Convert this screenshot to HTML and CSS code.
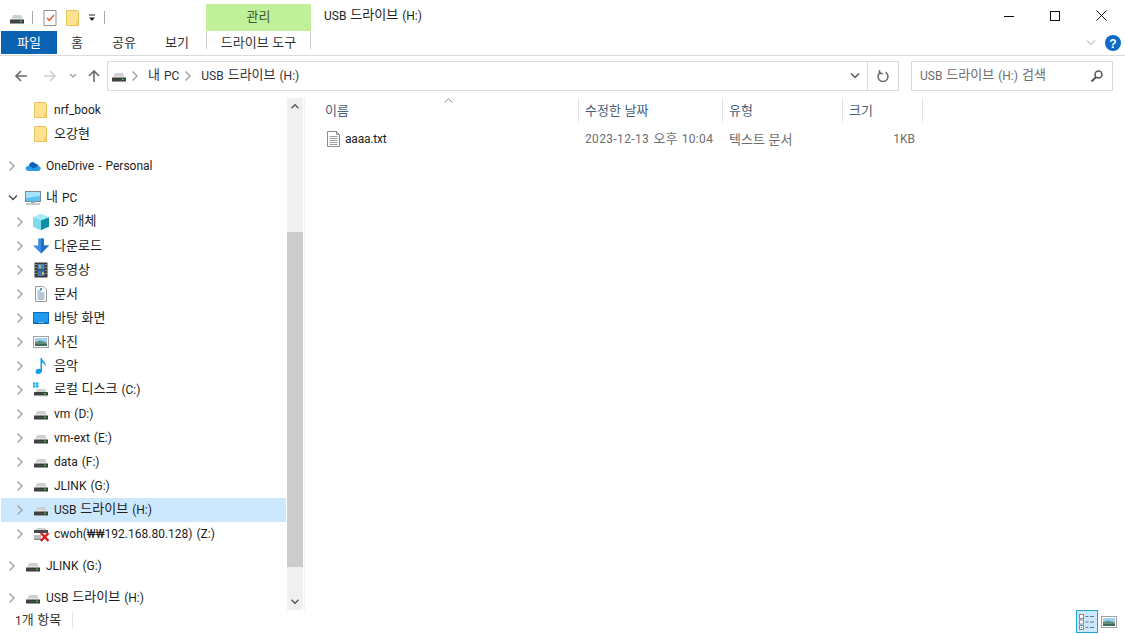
FILE: index.html
```html
<!DOCTYPE html>
<html lang="ko">
<head>
<meta charset="utf-8">
<title>USB 드라이브 (H:)</title>
<link rel="stylesheet" href="styles.css">
</head>
<body>
<svg class="defs" width="0" height="0" aria-hidden="true">
  <defs>
    <symbol id="drive" viewBox="0 0 16 16">
      <path d="M2.500 9 4 5h8l1.500 4z" fill="#cfcfcf"/>
      <path d="M1 9.500 2.500 8h11L15 9.500z" fill="#e0e0e0"/>
      <rect x="1" y="9.500" width="14" height="3.500" rx=".5" fill="#404040"/>
      <rect x="1" y="13" width="14" height="1" fill="#9a9a9a"/>
      <rect x="11" y="10.700" width="1.600" height="1.300" fill="#3fe04a"/>
    </symbol>
    <symbol id="folder" viewBox="0 0 16 16">
      <path d="M1.500 .5h11l1 1v14H1.500z" fill="#fde28f" stroke="#e8c35a"/>
      <path d="M11 11h2.500v4H11z" fill="#f5cf68"/>
    </symbol>
    <symbol id="cloud" viewBox="0 0 16 16">
      <path d="M4 7.500a3.500 3.500 0 0 1 6.500-1.800A3 3 0 0 1 13.500 8l-5 3.500-6-1z" fill="#0a62b8"/>
      <path d="M3 13a2.500 2.500 0 0 1-.6-4.900L4.500 7.800l4 2.700 5-2.400a2.500 2.500 0 0 1 2.200 2.500 2.400 2.400 0 0 1-2.400 2.400z" fill="#2a9be8"/>
    </symbol>
    <symbol id="pc" viewBox="0 0 16 16">
      <rect x=".5" y="1.500" width="15" height="10" fill="#5cc4f5" stroke="#7a8a96"/>
      <path d="M1 2h14v4L1 8z" fill="#a5e2fb"/>
      <path d="M6 11.500h4v1.500H6z" fill="#a0a8ae"/>
      <path d="M1 13.500h14v1H1z" fill="#8c97a0"/>
    </symbol>
    <symbol id="cube" viewBox="0 0 16 16">
      <path d="M8 0 16 3.500v9L8 16 0 12.500v-9z" fill="#33b9d0"/>
      <path d="M8 0 16 3.500 8 6.500 0 3.500z" fill="#a8ecf5"/>
      <path d="M0 3.500 8 6.500V16L0 12.500z" fill="#7fdcea"/>
      <path d="M8 6.500 16 3.500v9L8 16z" fill="#0f8ea8"/>
    </symbol>
    <symbol id="down" viewBox="0 0 16 16">
      <path d="M5.200 .5h5.600v7H16L8 15.500 0 7.500h5.200z" fill="#3a8fe0"/>
      <path d="M8 .5h2.800v7H16L8 15.500z" fill="#1f6fc4"/>
    </symbol>
    <symbol id="film" viewBox="0 0 16 16">
      <rect x="1.500" y="0.500" width="13" height="15" fill="#3a3a3a"/>
      <path d="M4.500 2h7v5.500h-7z" fill="#3f87c8"/>
      <path d="M4.500 8.500h7v5.500h-7z" fill="#3f78b0"/>
      <path d="M6 3h2v3H6zM9 10h2v3H9z" fill="#d8b04a"/>
      <path d="M2.500 2h1v1h-1zM2.500 5h1v1h-1zM2.500 8h1v1h-1zM2.500 11h1v1h-1zM12.500 2h1v1h-1zM12.500 5h1v1h-1zM12.500 8h1v1h-1zM12.500 11h1v1h-1z" fill="#d8d8d8"/>
    </symbol>
    <symbol id="doc" viewBox="0 0 16 16">
      <path d="M2.500 .5h8l3 3v12h-11z" fill="#fff" stroke="#9a9a9a"/>
      <path d="M4.500 5h3M4.500 7h7M4.500 9h7M4.500 11h7M4.500 13h7" stroke="#6f8fa8"/>
      <path d="M7 2h2v2.500H7z" fill="#4a9ad8"/>
    </symbol>
    <symbol id="txt" viewBox="0 0 16 16">
      <path d="M1.500 .5h9l3 3v12h-12z" fill="#fff" stroke="#8c8c8c"/>
      <path d="M10.500 .5v3h3" fill="none" stroke="#8c8c8c"/>
      <path d="M3.500 5.500h8M3.500 7.500h8M3.500 9.500h8M3.500 11.500h8M3.500 13.500h8" stroke="#a0a0a0"/>
    </symbol>
    <symbol id="desk" viewBox="0 0 16 16">
      <rect x=".5" y="2.500" width="15" height="11" fill="#1e9bf0" stroke="#0f6cb8"/>
      <path d="M1 12.500h14v1H1z" fill="#0a5ea8"/>
      <path d="M5 12h6v.600H5z" fill="#bfe6ff"/>
    </symbol>
    <symbol id="pic" viewBox="0 0 16 16">
      <rect x=".5" y="2.500" width="15" height="11" fill="#fff" stroke="#a0a0a0"/>
      <path d="M2 4h12v4H2z" fill="#9ed2f0"/>
      <path d="M2 8 7 6.500 14 8.500V12H2z" fill="#5f8f7a"/>
      <path d="M2 10h12v2H2z" fill="#3f6a5f"/>
    </symbol>
    <symbol id="note" viewBox="0 0 16 16">
      <path d="M7.500 0h1.500c.2 3.500 4.800 4.200 3.600 8.800-.3-2.300-2.300-3.800-3.600-4.200V13c0 1.800-1.700 3-3.500 3S2.500 15 2.500 13.400 4.200 10.800 6 10.800c.6 0 1.100.1 1.500.3z" fill="#12a0e8"/>
    </symbol>
    <symbol id="sys" viewBox="0 0 16 16">
      <path d="M2.500 10 4 7h8l1.500 3z" fill="#cfcfcf"/>
      <rect x="1" y="10" width="14" height="3.200" rx=".5" fill="#404040"/>
      <rect x="1" y="13.200" width="14" height="1" fill="#9a9a9a"/>
      <rect x="11" y="11" width="1.600" height="1.300" fill="#3fe04a"/>
      <path d="M0 .5h2.500V2.800H0zM3 .5h2.500V2.800H3zM0 3.300h2.500v2.300H0zM3 3.300h2.500v2.300H3z" fill="#12b0ee"/>
    </symbol>
    <symbol id="net" viewBox="0 0 16 16">
      <path d="M2.500 4 4 2h8l1.500 2z" fill="#cfcfcf"/>
      <rect x="1" y="4" width="14" height="3" fill="#4a4a4a"/>
      <rect x="1" y="9" width="7" height="3.500" fill="#bcbcbc"/>
      <path d="M1 12.500h7V14H1z" fill="#8a8a8a"/>
      <path d="M7.800 7 15.500 15M15.500 7 7.800 15" stroke="#e01a1a" stroke-width="2.400"/>
    </symbol>
    <symbol id="chev-r" viewBox="0 0 8 10">
      <path d="M.5 .5 5 5 .5 9.500" fill="none" stroke="#a6a6a6" stroke-width="1.500"/>
    </symbol>
    <symbol id="chev-d" viewBox="0 0 10 8">
      <path d="M1 1.500 5 5.500 9 1.500" fill="none" stroke="#4d4d4d" stroke-width="1.500"/>
    </symbol>
  </defs>
</svg>

<div class="window">
  <header class="titlebar">
    <div class="qat">
      <svg class="ico16"><use href="#drive"/></svg>
      <span class="qat-sep"></span>
      <svg class="ico-props" viewBox="0 0 14 16"><path d="M1 .5h12v15H1z" fill="#fff" stroke="#8f8f8f"/><path d="M4 8 6.300 10.500 11 5" fill="none" stroke="#e2572a" stroke-width="1.400"/></svg>
      <svg class="ico-qfolder"><use href="#folder"/></svg>
      <svg class="ico-menu" viewBox="0 0 8 8"><path d="M1 .5h6v1H1z" fill="#222"/><path d="M1 3.500h6L4 7z" fill="#222"/></svg>
      <span class="qat-sep last"></span>
    </div>
    <div class="context-title ko">관리</div>
    <div class="win-title">USB <span class="ko">드라이브</span> (H:)</div>
    <div class="win-controls">
      <span class="win-btn"><svg width="10" height="10" viewBox="0 0 10 10"><path d="M0 5.500h10" stroke="#111"/></svg></span>
      <span class="win-btn"><svg width="10" height="10" viewBox="0 0 10 10"><rect x=".5" y=".5" width="9" height="9" fill="none" stroke="#111"/></svg></span>
      <span class="win-btn"><svg width="11" height="11" viewBox="0 0 11 11"><path d="M.5.500l10 10M10.500.500l-10 10" stroke="#111"/></svg></span>
    </div>
  </header>

  <nav class="tabs">
    <span class="tab file ko">파일</span>
    <span class="tab t-home ko">홈</span>
    <span class="tab t-share ko">공유</span>
    <span class="tab t-view ko">보기</span>
    <span class="tab context ko">드라이브 도구</span>
    <span class="tabs-end">
      <svg class="ribbon-chev" viewBox="0 0 10 6"><path d="M1 .5 5 4.500 9 .5" fill="none" stroke="#9a9a9a"/></svg>
      <svg class="help" viewBox="0 0 16 16"><circle cx="8" cy="8" r="8" fill="#0f6cc4"/><text x="8" y="12.500" text-anchor="middle" class="help-q">?</text></svg>
    </span>
  </nav>

  <div class="addressrow">
    <div class="navbtns">
      <svg class="nav-arrow" viewBox="0 0 14 14"><path d="M13 7H2M7 2 2 7l5 5" fill="none" stroke="#6b6b6b" stroke-width="1.600"/></svg>
      <svg class="nav-arrow" viewBox="0 0 14 14"><path d="M1 7h11M7 2l5 5-5 5" fill="none" stroke="#d0d0d0" stroke-width="1.600"/></svg>
      <svg class="nav-down" viewBox="0 0 8 6"><path d="M1 1l3 3 3-3" fill="none" stroke="#9a9a9a" stroke-width="1.200"/></svg>
      <svg class="nav-arrow up" viewBox="0 0 14 14"><path d="M7 13V2M2 7l5-5 5 5" fill="none" stroke="#6b6b6b" stroke-width="1.600"/></svg>
    </div>
    <div class="address">
      <svg class="ico16 addr-ico"><use href="#drive"/></svg>
      <svg class="crumb-chev"><use href="#chev-r"/></svg>
      <span class="crumb"><span class="ko">내</span> PC</span>
      <svg class="crumb-chev"><use href="#chev-r"/></svg>
      <span class="crumb">USB <span class="ko">드라이브</span> (H:)</span>
      <svg class="addr-drop" viewBox="0 0 10 8"><path d="M1 1.500 5 5.500 9 1.500" fill="none" stroke="#555" stroke-width="1.500"/></svg>
      <span class="refresh"><svg width="14" height="14" viewBox="0 0 14 14"><path d="M9.500 3.200a5 5 0 1 1-5 0" fill="none" stroke="#6b6b6b" stroke-width="1.500"/><path d="M3.500 1v3.600H7" fill="none" stroke="#6b6b6b" stroke-width="1.500"/></svg></span>
    </div>
    <div class="search">
      <span class="search-text">USB <span class="ko">드라이브</span> (H:) <span class="ko">검색</span></span>
      <svg width="14" height="14" viewBox="0 0 14 14"><circle cx="8.500" cy="5.500" r="3.500" fill="none" stroke="#555" stroke-width="1.500"/><path d="M6 8l-4.500 4.500" stroke="#555" stroke-width="2"/></svg>
    </div>
  </div>

  <main class="main">
    <aside class="tree">
      <div class="tree-list">
        <div class="row d2"><span class="chev"></span><svg class="ico16"><use href="#folder"/></svg><span>nrf_book</span></div>
        <div class="row d2"><span class="chev"></span><svg class="ico16"><use href="#folder"/></svg><span class="ko">오강현</span></div>
        <div class="row d1 gap"><svg class="chev"><use href="#chev-r"/></svg><svg class="ico16"><use href="#cloud"/></svg><span>OneDrive - Personal</span></div>
        <div class="row d1 gap"><svg class="chev wide"><use href="#chev-d"/></svg><svg class="ico16"><use href="#pc"/></svg><span class="mixed"><span class="ko">내</span> PC</span></div>
        <div class="row d2"><svg class="chev"><use href="#chev-r"/></svg><svg class="ico16"><use href="#cube"/></svg><span class="mixed">3D <span class="ko">개체</span></span></div>
        <div class="row d2"><svg class="chev"><use href="#chev-r"/></svg><svg class="ico16"><use href="#down"/></svg><span class="ko">다운로드</span></div>
        <div class="row d2"><svg class="chev"><use href="#chev-r"/></svg><svg class="ico16"><use href="#film"/></svg><span class="ko">동영상</span></div>
        <div class="row d2"><svg class="chev"><use href="#chev-r"/></svg><svg class="ico16"><use href="#doc"/></svg><span class="ko">문서</span></div>
        <div class="row d2"><svg class="chev"><use href="#chev-r"/></svg><svg class="ico16"><use href="#desk"/></svg><span class="ko">바탕 화면</span></div>
        <div class="row d2"><svg class="chev"><use href="#chev-r"/></svg><svg class="ico16"><use href="#pic"/></svg><span class="ko">사진</span></div>
        <div class="row d2"><svg class="chev"><use href="#chev-r"/></svg><svg class="ico16"><use href="#note"/></svg><span class="ko">음악</span></div>
        <div class="row d2"><svg class="chev"><use href="#chev-r"/></svg><svg class="ico16"><use href="#sys"/></svg><span class="mixed"><span class="ko">로컬 디스크</span> (C:)</span></div>
        <div class="row d2"><svg class="chev"><use href="#chev-r"/></svg><svg class="ico16"><use href="#drive"/></svg><span>vm (D:)</span></div>
        <div class="row d2"><svg class="chev"><use href="#chev-r"/></svg><svg class="ico16"><use href="#drive"/></svg><span>vm-ext (E:)</span></div>
        <div class="row d2"><svg class="chev"><use href="#chev-r"/></svg><svg class="ico16"><use href="#drive"/></svg><span>data (F:)</span></div>
        <div class="row d2"><svg class="chev"><use href="#chev-r"/></svg><svg class="ico16"><use href="#drive"/></svg><span>JLINK (G:)</span></div>
        <div class="row d2 selected"><svg class="chev"><use href="#chev-r"/></svg><svg class="ico16"><use href="#drive"/></svg><span class="mixed">USB <span class="ko">드라이브</span> (H:)</span></div>
        <div class="row d2"><svg class="chev"><use href="#chev-r"/></svg><svg class="ico16"><use href="#net"/></svg><span>cwoh(₩₩192.168.80.128) (Z:)</span></div>
        <div class="row d1 gap"><svg class="chev"><use href="#chev-r"/></svg><svg class="ico16"><use href="#drive"/></svg><span>JLINK (G:)</span></div>
        <div class="row d1 gap"><svg class="chev"><use href="#chev-r"/></svg><svg class="ico16"><use href="#drive"/></svg><span class="mixed">USB <span class="ko">드라이브</span> (H:)</span></div>
      </div>
      <div class="scrollbar">
        <svg class="sb-arrow" viewBox="0 0 10 8"><path d="M1 6 5 2l4 4" fill="none" stroke="#555" stroke-width="1.600"/></svg>
        <div class="sb-track"><div class="sb-thumb"></div></div>
        <svg class="sb-arrow" viewBox="0 0 10 8"><path d="M1 2l4 4 4-4" fill="none" stroke="#555" stroke-width="1.600"/></svg>
      </div>
    </aside>

    <section class="files">
      <div class="file-head">
        <svg class="sort" viewBox="0 0 9 5"><path d="M.5 4.500 4.500 .8 8.500 4.500" fill="none" stroke="#8a8a8a"/></svg>
        <span class="col c-name ko">이름</span>
        <span class="col c-date ko">수정한 날짜</span>
        <span class="col c-type ko">유형</span>
        <span class="col c-size ko">크기</span>
      </div>
      <div class="file-row">
        <span class="cell c-name name"><svg class="ico16"><use href="#txt"/></svg>aaaa.txt</span>
        <span class="cell c-date date">2023-12-13 <span class="ko">오후</span> 10:04</span>
        <span class="cell c-type ko">텍스트 문서</span>
        <span class="cell c-size num">1KB</span>
      </div>
    </section>
  </main>

  <footer class="status">
    <span class="count">1<span class="ko">개 항목</span></span>
    <span class="views">
      <span class="view active"><svg width="18" height="18" viewBox="0 0 18 18"><rect x="1.500" y="1.500" width="4" height="4" fill="#fff" stroke="#8a8a8a"/><rect x="1.500" y="7" width="4" height="4" fill="#fff" stroke="#8a8a8a"/><rect x="1.500" y="12.500" width="4" height="4" fill="#fff" stroke="#8a8a8a"/><path d="M7.500 3.500h3M12 3.500h4M7.500 9h3M12 9h4M7.500 14.500h3M12 14.500h4" stroke="#777"/><path d="M3 14h1v1H3z" fill="#b03030"/></svg></span>
      <span class="view second"><svg width="16" height="16"><use href="#pic"/></svg></span>
    </span>
  </footer>
</div>
</body>
</html>
```

FILE: styles.css
```css
* { box-sizing: border-box; }
html, body { margin: 0; padding: 0; background: #fff; }
body {
  font-family: Roboto, "Noto Sans CJK KR", sans-serif;
  font-size: 12px;
  line-height: 16px;
  word-spacing: 1px;
  color: #1e1e1e;
  overflow: hidden;
}
.ko {
  font-family: "Noto Sans CJK KR", sans-serif;
  font-size: 13px;
  line-height: 14px;
  word-spacing: 0;
  vertical-align: 1px;
  padding-bottom: 2px;
}
.mixed { margin-bottom: 2px; }
.defs { position: absolute; }
svg { display: block; flex: none; }
.ico16 { width: 16px; height: 16px; }

.window {
  width: 1125px;
  height: 634px;
  display: flex;
  flex-direction: column;
}

/* title bar */
.titlebar {
  height: 31px;
  display: flex;
  align-items: flex-end;
  padding-left: 9px;
}
.qat {
  width: 197px;
  height: 27px;
  display: flex;
  align-items: center;
}
.qat-sep { width: 1px; height: 13px; background: #a9a9a9; margin: 0 10px 0 7px; }
.qat-sep.last { margin-left: 8px; }
.ico-props { width: 14px; height: 16px; }
.ico-qfolder { width: 16px; height: 16px; margin-left: 8px; }
.ico-menu { width: 8px; height: 8px; margin-left: 7px; }
.context-title {
  width: 105px;
  height: 27px;
  background: #c0f09a;
  color: #3f5a2c;
  text-align: center;
  line-height: 24px;
}
.win-title { margin-left: 13px; height: 27px; line-height: 24px; }
.win-controls {
  margin-left: auto;
  align-self: flex-start;
  display: flex;
  padding-right: 1px;
}
.win-btn {
  width: 46px;
  height: 31px;
  display: flex;
  align-items: center;
  justify-content: center;
}

/* ribbon tabs */
.tabs {
  height: 25px;
  display: flex;
  align-items: flex-start;
  padding-left: 1px;
  border-bottom: 1px solid #dadbdc;
}
.tab { height: 23px; line-height: 22px; text-align: center; color: #333; }
.file { width: 56px; background: #0a63b2; color: #fff; }
.t-home { width: 40px; }
.t-share { width: 54px; }
.t-view { width: 52px; margin-right: 3px; }
.context {
  width: 105px;
  height: 18px;
  line-height: 21px;
  border-left: 1px solid #d0d0d0;
  border-right: 1px solid #d0d0d0;
}
.tabs-end {
  margin-left: auto;
  display: flex;
  align-items: center;
  gap: 9px;
  padding: 4px 4px 0 0;
}
.ribbon-chev { width: 10px; height: 6px; }
.help { width: 16px; height: 16px; }
.help-q { font: bold 12px "Liberation Sans", sans-serif; fill: #fff; }

/* address row */
.addressrow {
  height: 40px;
  padding-top: 5px;
  display: flex;
  align-items: flex-start;
}
.navbtns {
  width: 107px;
  height: 30px;
  display: flex;
  align-items: center;
  padding-left: 14px;
}
.nav-arrow { width: 14px; height: 14px; }
.nav-arrow + .nav-arrow { margin-left: 15px; }
.nav-down { width: 8px; height: 6px; margin-left: 12px; }
.nav-arrow.up { margin-left: 10px; }
.address {
  width: 792px;
  height: 30px;
  border: 1px solid #d9d9d9;
  display: flex;
  align-items: center;
  padding-left: 3px;
  color: #333;
}
.addr-ico { margin-right: 5px; }
.crumb-chev { width: 8px; height: 10px; margin-right: 8px; }
.crumb { margin: 0 6px 2px 0; }
.addr-drop { width: 10px; height: 8px; margin-left: auto; margin-right: 7px; }
.refresh {
  width: 31px;
  height: 28px;
  border-left: 1px solid #d9d9d9;
  display: flex;
  align-items: center;
  justify-content: center;
}
.search {
  width: 202px;
  height: 30px;
  margin-left: 12px;
  border: 1px solid #d9d9d9;
  display: flex;
  align-items: center;
  justify-content: space-between;
  padding: 0 8px 0 8px;
  color: #6d6d6d;
}
.search-text { margin-bottom: 2px; }

/* main */
.main {
  height: 514px;
  display: flex;
  padding-top: 2px;
}
.tree {
  width: 305px;
  display: flex;
  border-right: 1px solid #f0f0f0;
}
.tree-list { width: 287px; padding: 0 1px; }
.row {
  height: 24px;
  display: flex;
  align-items: center;
}
.row.gap { margin-top: 8px; }
.row.d1 { padding-left: 8px; }
.row.d2 { padding-left: 16px; }
.row.selected { background: #cce8ff; }
.chev { width: 8px; height: 10px; margin-right: 8px; flex: none; }
.chev.wide { width: 10px; height: 8px; margin-left: -1px; margin-right: 7px; }
.row .ico16 { margin-right: 5px; }
.scrollbar {
  width: 16px;
  background: #f0f0f0;
  display: flex;
  flex-direction: column;
  height: 512px;
}
.sb-arrow { width: 16px; height: 17px; padding: 5px 3px; }
.sb-track { flex: 1; padding-top: 117px; }
.sb-thumb { height: 335px; background: #cdcdcd; }

/* files */
.files { flex: 1; position: relative; padding-left: 16px; }
.sort { position: absolute; left: 139px; top: 0; width: 9px; height: 5px; }
.file-head { height: 24px; display: flex; color: #4c607a; }
.file-row { height: 22px; margin-top: 6px; display: flex; color: #6d6d6d; align-items: center; }
.col { border-right: 1px solid #e5e5e5; line-height: 23px; height: 24px; padding: 0 0 0 6px; }
.cell { padding-left: 6px; white-space: nowrap; }
.cell.ko { padding-bottom: 0; line-height: 16px; }
.cell .ko { vertical-align: 0; }
.date { letter-spacing: .35px; }
.date .ko { letter-spacing: 0; }
.c-name { width: 258px; }
.c-date { width: 144px; }
.c-type { width: 120px; }
.c-size { width: 80px; }
.col.c-name { padding-left: 4px; }
.name { display: flex; align-items: center; gap: 3px; color: #1e1e1e; padding-left: 5px; letter-spacing: -.2px; }
.num { text-align: right; padding-right: 8px; }

/* status */
.status {
  height: 24px;
  display: flex;
  align-items: flex-start;
  padding-left: 15px;
  color: #333;
}
.count { width: 58px; height: 17px; line-height: 16px; margin-top: 2px; border-right: 1px solid #e5e5e5; }
.views { margin-left: auto; margin-right: 7px; display: flex; gap: 2px; }
.view { width: 18px; height: 23px; display: flex; align-items: center; justify-content: center; }
.view.active { width: 22px; background: #cce8ff; border: 1px solid #26a0da; }
```
